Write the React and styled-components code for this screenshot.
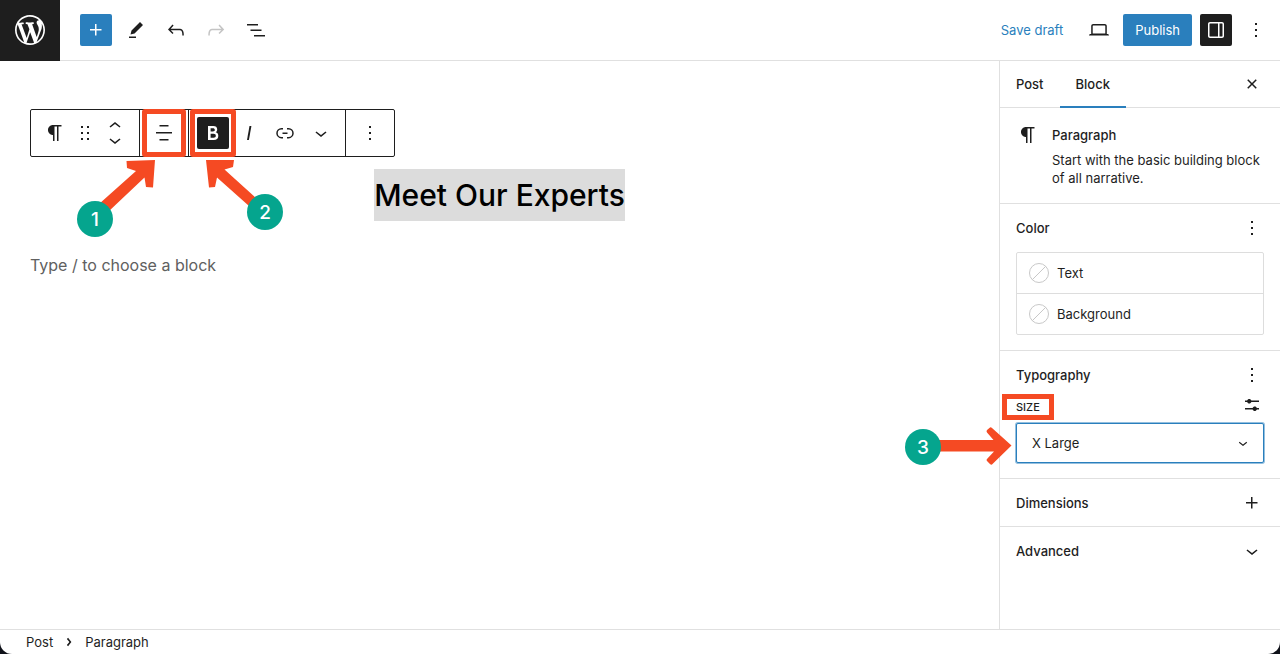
import React, { useState } from "react";
import styled, { createGlobalStyle, css } from "styled-components";

const GlobalStyle = createGlobalStyle`
  *, *::before, *::after {
    box-sizing: border-box;
  }

  body {
    margin: 0;
    background: #10121a;
    color: #1e1e1e;
    font-family: Inter, "Liberation Sans", sans-serif;
    font-size: 13px;
  }

  button, select {
    font: inherit;
    color: inherit;
  }
`;

const Editor = styled.div`
  display: flex;
  flex-direction: column;
  min-height: 100vh;
  background: #ffffff;
  border-radius: 0 0 12px 12px;
  overflow: hidden;
`;

const Header = styled.header`
  display: flex;
  justify-content: space-between;
  height: 61px;
  border-bottom: 1px solid #e0e0e0;
`;

const HeaderGroup = styled.div`
  display: flex;
  align-items: center;
  gap: 8px;
  padding-right: 8px;
`;

const SiteLink = styled.a`
  display: flex;
  align-items: center;
  justify-content: center;
  width: 60px;
  height: 61px;
  margin-right: 12px;
  background: #1e1e1e;
  color: #ffffff;
`;

const IconButton = styled.button`
  display: flex;
  align-items: center;
  justify-content: center;
  width: 32px;
  height: 32px;
  padding: 0;
  border: none;
  border-radius: 2px;
  background: none;
  cursor: pointer;

  ${(props) =>
    props.$tone === "primary" &&
    css`
      background: #2a7fbd;
      color: #ffffff;
    `}

  ${(props) =>
    props.$tone === "dark" &&
    css`
      background: #1e1e1e;
      color: #ffffff;
    `}

  &:disabled {
    color: #c4c4c4;
  }
`;

const TextButton = styled.button`
  height: 32px;
  padding: 0 12px;
  border: none;
  border-radius: 2px;
  background: ${(props) => (props.$primary ? "#2a7fbd" : "none")};
  color: ${(props) => (props.$primary ? "#ffffff" : "#2a7fbd")};
  cursor: pointer;
`;

const Body = styled.div`
  display: flex;
  flex: 1;
`;

const Canvas = styled.main`
  flex: 1;
  padding: 48px 30px;
`;

const ToolbarArea = styled.div`
  position: relative;
  width: max-content;
`;

const Toolbar = styled.div`
  display: flex;
  height: 48px;
  border: 1px solid #1e1e1e;
  border-radius: 2px;
`;

const ToolbarGroup = styled.div`
  display: flex;
  align-items: center;
  padding: 0 6px;

  & + & {
    border-left: 1px solid #1e1e1e;
  }
`;

const ToolbarButton = styled.button`
  position: relative;
  display: flex;
  align-items: center;
  justify-content: center;
  width: ${(props) => (props.$narrow ? "24px" : "36px")};
  height: 46px;
  padding: 0;
  border: none;
  background: none;
  cursor: pointer;
`;

const Pressed = styled.span`
  display: flex;
  align-items: center;
  justify-content: center;
  width: 32px;
  height: 32px;
  border-radius: 2px;
  background: #1e1e1e;
  color: #ffffff;
`;

const Movers = styled.div`
  display: flex;
  flex-direction: column;
  width: 36px;
`;

const MoverButton = styled.button`
  display: flex;
  align-items: center;
  justify-content: center;
  height: 14px;
  padding: 0;
  border: none;
  background: none;
  cursor: pointer;
`;

/* red frame drawn over the control it points out */
const Frame = styled.span`
  position: absolute;
  inset: ${(props) => props.$inset};
  border: 5px solid #f54a23;
  border-radius: ${(props) => (props.$square ? "0" : "3px")};
  pointer-events: none;
`;

const Callout = styled.div`
  position: absolute;
  left: ${(props) => props.$left}px;
  top: ${(props) => props.$top}px;
  pointer-events: none;

  svg {
    display: block;
    fill: #f54a23;
  }
`;

const Badge = styled.span`
  position: absolute;
  ${(props) => (props.$side === "right" ? "right: 0;" : "left: 0;")}
  bottom: 0;
  display: flex;
  align-items: center;
  justify-content: center;
  width: 36px;
  height: 36px;
  border-radius: 50%;
  background: #05a58e;
  color: #ffffff;
  font-size: 19px;
  font-weight: 500;
`;

const Title = styled.h2`
  margin: 12px 0 30px;
  color: #000000;
  font-size: 30px;
  font-weight: 500;
  line-height: 52px;
  text-align: center;
`;

const Selection = styled.span`
  display: inline-block;
  background: #dcdcdc;
`;

const Placeholder = styled.p`
  margin: 0;
  color: #606060;
  font-size: 16px;
  line-height: 28px;
`;

const Sidebar = styled.aside`
  width: 281px;
  border-left: 1px solid #e0e0e0;
`;

const Tabs = styled.div`
  display: flex;
  align-items: center;
  height: 47px;
  padding-right: 12px;
  border-bottom: 1px solid #e0e0e0;
`;

const Tab = styled.button`
  height: 47px;
  padding: 0 16px;
  border: none;
  background: none;
  box-shadow: ${(props) => (props.$active ? "inset 0 -2px 0 #2a7fbd" : "none")};
  font-weight: 500;
  cursor: pointer;
`;

const CloseButton = styled(IconButton)`
  margin-left: auto;
`;

const BlockCard = styled.div`
  display: flex;
  gap: 12px;
  padding: 15px 16px 16px;
`;

const CardName = styled.h3`
  margin: 0 0 4px;
  font-size: 13px;
  font-weight: 500;
  line-height: 24px;
`;

const CardText = styled.p`
  margin: 0;
  line-height: 18px;
`;

const Panel = styled.section`
  border-top: 1px solid #e0e0e0;
  padding: 0 16px 15px;
`;

const PanelHeader = styled.div`
  display: flex;
  align-items: center;
  justify-content: space-between;
  height: 48px;
`;

const PanelTitle = styled.h3`
  margin: 0;
  font-size: 13px;
  font-weight: 500;
`;

const SmallButton = styled(IconButton)`
  width: 24px;
  height: 24px;
`;

const PanelToggle = styled.button`
  display: flex;
  align-items: center;
  justify-content: space-between;
  width: 100%;
  height: 48px;
  padding: 0 16px;
  border: none;
  border-top: 1px solid #e0e0e0;
  background: none;
  font-weight: 500;
  cursor: pointer;
`;

const ColorList = styled.div`
  border: 1px solid #dddddd;
  border-radius: 2px;
`;

const ColorItem = styled.button`
  display: flex;
  align-items: center;
  gap: 8px;
  width: 100%;
  height: 40px;
  padding: 0 12px;
  border: none;
  background: none;
  cursor: pointer;

  & + & {
    height: 41px;
    border-top: 1px solid #dddddd;
  }
`;

const SizeRow = styled.div`
  display: flex;
  align-items: flex-start;
  justify-content: space-between;
  height: 24px;
`;

const SizeLabel = styled.label`
  position: relative;
  font-size: 11px;
  font-weight: 500;
  line-height: 16px;
  text-transform: uppercase;
`;

const SizeOptions = styled(SmallButton)`
  height: 12px;
`;

const SelectBox = styled.div`
  position: relative;

  & > svg {
    position: absolute;
    right: 12px;
    top: 11px;
    pointer-events: none;
  }
`;

const Select = styled.select`
  display: block;
  width: 100%;
  height: 40px;
  padding: 0 15px;
  border: 1px solid #2a7fbd;
  border-radius: 2px;
  box-shadow: 0 0 0 1px rgba(42, 127, 189, 0.5);
  background: #ffffff;
  appearance: none;
  outline: none;
`;

const Footer = styled.footer`
  height: 25px;
  padding: 0 26px;
  border-top: 1px solid #e0e0e0;
`;

const Breadcrumb = styled.nav`
  display: flex;
  align-items: center;
  gap: 8px;
  height: 24px;

  a {
    color: inherit;
    text-decoration: none;
  }
`;

const paths = {
  plus: "M11 12.5V17.5H12.5V12.5H17.5V11H12.5V6H11V11H6V12.5H11Z",
  edit: "m19 7-3-3-8.5 8.5-1 4 4-1L19 7Zm-7 11.5H5V20h7v-1.5Z",
  undo: "M18.3 11.7c-.6-.6-1.4-.9-2.3-.9H6.7l2.9-3.3-1.1-1-4.5 5L8.5 16l1-1-2.7-2.7H16c.5 0 .9.2 1.3.5 1 1 1 3.4 1 4.5v.3h1.5v-.2c0-1.5 0-4.3-1.5-5.7z",
  redo: "M15.6 6.5l-1.1 1 2.9 3.3H8c-.9 0-1.7.3-2.3.9-1.4 1.5-1.4 4.2-1.4 5.6v.2h1.5v-.3c0-1.1 0-3.5 1-4.5.3-.3.7-.5 1.3-.5h9.2L14.5 15l1.1 1.1 4.6-4.6-4.6-5z",
  listView: "M3 6h11v1.5H3V6Zm3.5 5.5h11V13h-11v-1.5ZM21 17H10v1.5h11V17Z",
  laptop:
    "M20.5 16h-.7V8c0-1.1-.9-2-2-2H6.2c-1.1 0-2 .9-2 2v8h-.7c-.8 0-1.5.7-1.5 1.5h20c0-.8-.7-1.5-1.5-1.5zM5.7 8c0-.3.2-.5.5-.5h11.6c.3 0 .5.2.5.5v7.6H5.7V8z",
  drawer:
    "M18 4H6c-1.1 0-2 .9-2 2v12c0 1.1.9 2 2 2h12c1.1 0 2-.9 2-2V6c0-1.1-.9-2-2-2zm-4 14.5H6c-.3 0-.5-.2-.5-.5V6c0-.3.2-.5.5-.5h8v13zm4.5-.5c0 .3-.2.5-.5.5h-2.5v-13H18c.3 0 .5.2.5.5v12z",
  more: "M13 19h-2v-2h2v2zm0-6h-2v-2h2v2zm0-6h-2V5h2v2z",
  paragraph:
    "m9.996 14v-.2251l.0039.0001v6.225h1.5v-14.5h2.5v14.5h1.5v-14.5h3v-1.5h-8.504c-2.761 0-5 2.239-5 5 0 2.761 2.239 5 5 5z",
  drag: "M8 7h2V5H8v2zm0 6h2v-2H8v2zm0 6h2v-2H8v2zm6-14v2h2V5h-2zm0 8h2v-2h-2v2zm0 6h2v-2h-2v2z",
  chevronUp: "M6.5 12.4L12 8l5.5 4.4-.9 1.2L12 10l-4.5 3.6-1-1.2z",
  chevronDown: "M17.5 11.6L12 16l-5.5-4.4.9-1.2L12 14l4.5-3.6 1 1.2z",
  chevronRight: "M10.6 5.8L8.8 7.5 12.6 12l-3.8 4.5 1.8 1.7L15.6 12z",
  alignCenter: "M7.5 5.5h9V4h-9v1.5Zm-3.5 7h16V11H4v1.5Zm3.5 7h9V18h-9v1.5Z",
  bold: "M14.7 11.3c1-.6 1.5-1.6 1.5-3 0-2.3-1.3-3.4-4-3.4H7v14h5.8c1.4 0 2.5-.3 3.3-1 .8-.7 1.2-1.7 1.2-2.9.1-1.9-.8-3.1-2.6-3.7zm-5.1-4h2.3c.6 0 1.1.1 1.4.4.3.3.5.7.5 1.2s-.2 1-.5 1.2c-.3.3-.8.4-1.4.4H9.6V7.3zm4.6 9c-.4.3-1 .4-1.7.4H9.6v-3.9h2.9c.7 0 1.3.2 1.7.5.4.3.6.8.6 1.5s-.2 1.2-.6 1.5z",
  italic: "M12.5 5L10 19h1.9l2.5-14z",
  link: "M10 17.389H8.444A5.194 5.194 0 1 1 8.444 7H10v1.5H8.444a3.694 3.694 0 0 0 0 7.389H10v1.5ZM14 7h1.556a5.194 5.194 0 0 1 0 10.39H14v-1.5h1.556a3.694 3.694 0 0 0 0-7.39H14V7Zm-4.5 6h5v-1.5h-5V13Z",
  close:
    "M12 13.06l3.712 3.713 1.061-1.06L13.061 12l3.712-3.712-1.06-1.06L12 10.938 8.288 7.227l-1.061 1.06L10.939 12l-3.712 3.712 1.06 1.061L12 13.061z",
  settings:
    "M19 7.5h-7.628c-.309-.874-1.142-1.5-2.122-1.5s-1.813.626-2.122 1.5H5V9h2.128c.309.874 1.142 1.5 2.122 1.5s1.813-.626 2.122-1.5H19V7.5zM19 15h-2.128c-.309-.874-1.142-1.5-2.122-1.5s-1.813.626-2.122 1.5H5v1.5h7.628c.309.874 1.142 1.5 2.122 1.5s1.813-.626 2.122-1.5H19V15z",
};

const Icon = ({ name, size = 24 }) => (
  <IconSvg
    width={size}
    height={size}
    viewBox="0 0 24 24"
    fill="currentColor"
    aria-hidden="true"
  >
    <path d={paths[name]} />
  </IconSvg>
);

const IconSvg = styled.svg`
  flex-shrink: 0;
`;

const Logo = () => (
  <svg width="36" height="36" viewBox="-2 -2 24 24" fill="currentColor">
    <path d="M20 10c0-5.51-4.49-10-10-10C4.48 0 0 4.49 0 10c0 5.52 4.48 10 10 10 5.51 0 10-4.48 10-10zM7.78 15.37L4.37 6.22c.55-.02 1.17-.08 1.17-.08.5-.06.44-1.13-.06-1.11 0 0-1.45.11-2.37.11-.18 0-.37 0-.58-.01C4.12 2.69 6.87 1.11 10 1.11c2.33 0 4.45.87 6.05 2.34-.68-.11-1.65.39-1.65 1.58 0 .74.45 1.36.9 2.1.35.61.55 1.36.55 2.46 0 1.49-1.4 5-1.4 5l-3.03-8.37c.54-.02.82-.17.82-.17.5-.05.44-1.25-.06-1.22 0 0-1.44.12-2.38.12-.87 0-2.33-.12-2.33-.12-.5-.03-.56 1.2-.06 1.22l.92.08 1.26 3.41zM17.41 10c.24-.64.74-1.87.43-4.25.7 1.29 1.05 2.71 1.05 4.25 0 3.29-1.73 6.24-4.4 7.78.97-2.59 1.94-5.2 2.92-7.78zM6.1 18.09C3.12 16.65 1.11 13.53 1.11 10c0-1.3.23-2.48.72-3.59C3.25 10.3 4.67 14.2 6.1 18.09zm4.03-6.63l2.58 6.98c-.86.29-1.76.45-2.71.45-.79 0-1.57-.11-2.29-.33.81-2.38 1.62-4.74 2.42-7.1z" />
  </svg>
);

const EmptySwatch = () => (
  <svg width="20" height="20" viewBox="0 0 20 20" fill="none" stroke="#c8c8c8">
    <circle cx="10" cy="10" r="9.5" />
    <path d="M3.3 16.7L16.7 3.3" />
  </svg>
);

const App = () => {
  const [size, setSize] = useState("x-large");

  return (
    <Editor>
      <GlobalStyle />
      <Header>
        <HeaderGroup>
          <SiteLink href="#" aria-label="View Posts">
            <Logo />
          </SiteLink>
          <IconButton $tone="primary" aria-label="Add block">
            <Icon name="plus" />
          </IconButton>
          <IconButton aria-label="Tools">
            <Icon name="edit" />
          </IconButton>
          <IconButton aria-label="Undo">
            <Icon name="undo" />
          </IconButton>
          <IconButton aria-label="Redo" disabled>
            <Icon name="redo" />
          </IconButton>
          <IconButton aria-label="Document overview">
            <Icon name="listView" />
          </IconButton>
        </HeaderGroup>
        <HeaderGroup>
          <TextButton>Save draft</TextButton>
          <IconButton aria-label="Preview">
            <Icon name="laptop" />
          </IconButton>
          <TextButton $primary>Publish</TextButton>
          <IconButton $tone="dark" aria-label="Settings">
            <Icon name="drawer" />
          </IconButton>
          <IconButton aria-label="Options">
            <Icon name="more" />
          </IconButton>
        </HeaderGroup>
      </Header>

      <Body>
        <Canvas>
          <ToolbarArea>
            <Toolbar role="toolbar" aria-label="Block tools">
              <ToolbarGroup>
                <ToolbarButton aria-label="Paragraph">
                  <Icon name="paragraph" />
                </ToolbarButton>
                <ToolbarButton $narrow aria-label="Drag">
                  <Icon name="drag" />
                </ToolbarButton>
                <Movers>
                  <MoverButton aria-label="Move up">
                    <Icon name="chevronUp" />
                  </MoverButton>
                  <MoverButton aria-label="Move down">
                    <Icon name="chevronDown" />
                  </MoverButton>
                </Movers>
              </ToolbarGroup>
              <ToolbarGroup>
                <ToolbarButton aria-label="Align text">
                  <Icon name="alignCenter" />
                  <Frame $inset="-1px -4px" />
                </ToolbarButton>
              </ToolbarGroup>
              <ToolbarGroup>
                <ToolbarButton aria-label="Bold" aria-pressed="true">
                  <Pressed>
                    <Icon name="bold" />
                  </Pressed>
                  <Frame $inset="-1px -5px" />
                </ToolbarButton>
                <ToolbarButton aria-label="Italic">
                  <Icon name="italic" />
                </ToolbarButton>
                <ToolbarButton aria-label="Link">
                  <Icon name="link" />
                </ToolbarButton>
                <ToolbarButton aria-label="More">
                  <Icon name="chevronDown" />
                </ToolbarButton>
              </ToolbarGroup>
              <ToolbarGroup>
                <ToolbarButton aria-label="Options">
                  <Icon name="more" />
                </ToolbarButton>
              </ToolbarGroup>
            </Toolbar>
            <Callout $left={47} $top={51}>
              <svg width="79" height="77" viewBox="0 0 79 77">
                <path d="M49.5 1L78 0L76 27.5L69 27L67.5 17.5L31 52L22 44L59 11L50 8Z" />
              </svg>
              <Badge>1</Badge>
            </Callout>
            <Callout $left={176} $top={51}>
              <svg width="77" height="70" viewBox="0 0 77 70">
                <path d="M0 0H28L27 7L18.5 9.5L50 38L43 46L11 17.5L9 27L3 27.5Z" />
              </svg>
              <Badge $side="right">2</Badge>
            </Callout>
          </ToolbarArea>
          <Title>
            <Selection>Meet Our Experts</Selection>
          </Title>
          <Placeholder>Type / to choose a block</Placeholder>
        </Canvas>

        <Sidebar>
          <Tabs>
            <Tab>Post</Tab>
            <Tab $active>Block</Tab>
            <CloseButton aria-label="Close settings">
              <Icon name="close" />
            </CloseButton>
          </Tabs>
          <BlockCard>
            <Icon name="paragraph" />
            <div>
              <CardName>Paragraph</CardName>
              <CardText>
                Start with the basic building block of all narrative.
              </CardText>
            </div>
          </BlockCard>
          <Panel>
            <PanelHeader>
              <PanelTitle>Color</PanelTitle>
              <SmallButton aria-label="Color options">
                <Icon name="more" />
              </SmallButton>
            </PanelHeader>
            <ColorList>
              {["Text", "Background"].map((label) => (
                <ColorItem key={label}>
                  <EmptySwatch />
                  {label}
                </ColorItem>
              ))}
            </ColorList>
          </Panel>
          <Panel>
            <PanelHeader>
              <PanelTitle>Typography</PanelTitle>
              <SmallButton aria-label="Typography options">
                <Icon name="more" />
              </SmallButton>
            </PanelHeader>
            <SizeRow>
              <SizeLabel htmlFor="font-size">
                Size
                <Frame $square $inset="-5px -14px" />
              </SizeLabel>
              <SizeOptions aria-label="Set custom size">
                <Icon name="settings" />
              </SizeOptions>
            </SizeRow>
            <SelectBox>
              <Select
                id="font-size"
                value={size}
                onChange={(e) => setSize(e.target.value)}
              >
                <option value="small">Small</option>
                <option value="medium">Medium</option>
                <option value="large">Large</option>
                <option value="x-large">X Large</option>
              </Select>
              <Icon name="chevronDown" size={18} />
              <Callout $left={-111} $top={4}>
                <svg width="107" height="38" viewBox="0 0 107 38">
                  <path d="M34 13H88.5L82 5.5Q81 4 82 3L85 0.5Q86 0 87 1L106.500 18.5L87 37.5Q86 38 85 37L82 34Q81 33 82 32L89 24.5H34Z" />
                </svg>
                <Badge>3</Badge>
              </Callout>
            </SelectBox>
          </Panel>
          <PanelToggle>
            Dimensions
            <Icon name="plus" />
          </PanelToggle>
          <PanelToggle>
            Advanced
            <Icon name="chevronDown" />
          </PanelToggle>
        </Sidebar>
      </Body>

      <Footer>
        <Breadcrumb aria-label="Block breadcrumb">
          <a href="#">Post</a>
          <Icon name="chevronRight" size={16} />
          <a href="#">Paragraph</a>
        </Breadcrumb>
      </Footer>
    </Editor>
  );
};

export default App;
